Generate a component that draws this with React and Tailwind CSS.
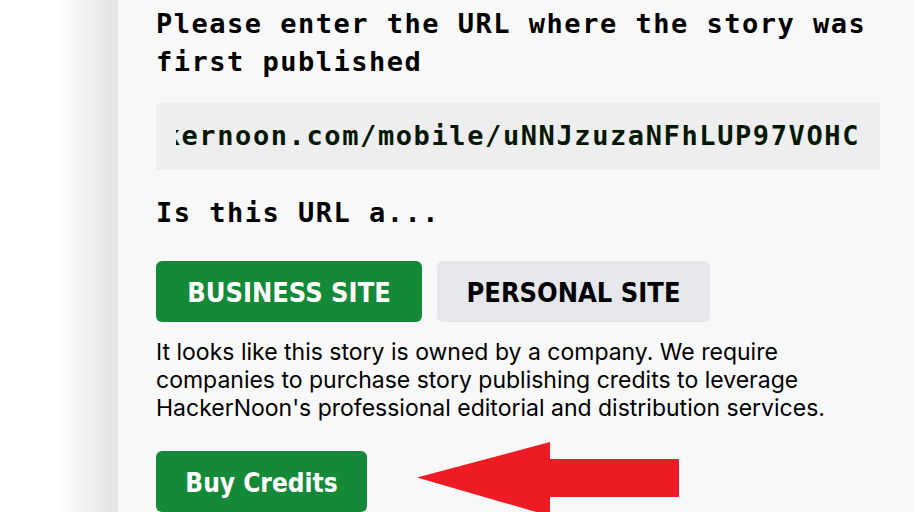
import { useState } from 'react';

const ArrowLeft = () => (
  <svg width="266" height="74" viewBox="0 0 266 74" className="shrink-0">
    <path
      d="M1 35.5 L134 0 L134 17 L262 17 Q263 17 263 18 L263 54 Q263 55 262 55 L134 55 L134 74 Z"
      fill="#ed1c24"
    />
  </svg>
);

const App = () => {
  const [siteType, setSiteType] = useState('business');
  const url = 'https://hackernoon.com/mobile/uNNJzuzaNFhLUP97VOHC';

  return (
    <div className="flex h-[512px] w-[914px] overflow-hidden bg-white">
      {/* page shadow on the left */}
      <div className="w-[118px] shrink-0 bg-gradient-to-r from-white from-50% to-[#e2e2e2]"></div>

      {/* Main panel */}
      <div className="min-w-0 flex-1 bg-[#f8f8f8] pl-[38px] pr-[34px] pt-[5px]">
        <h2 className="font-['DejaVu_Sans_Mono',monospace] text-[27px] font-bold leading-[38px] tracking-[1.5px] text-black">
          Please enter the URL where the story was first published
        </h2>

        <div className="mt-[22px] flex h-[67px] items-center bg-[#eeeeee] px-5">
          <div className="flex min-w-0 flex-1 justify-end overflow-hidden whitespace-nowrap font-['DejaVu_Sans_Mono',monospace] text-[27px] font-bold tracking-[1.6px] text-[#051805]">
            <span className="shrink-0">{url}</span>
          </div>
        </div>

        <h3 className="mt-[24px] font-['DejaVu_Sans_Mono',monospace] text-[27px] font-bold leading-[38px] tracking-[1.5px] text-black">
          Is this URL a...
        </h3>

        <div className="mt-[29px] flex gap-[15px]">
          <button
            onClick={() => setSiteType('business')}
            className={`h-[61px] w-[266px] rounded-md pt-[3px] font-['DejaVu_Sans_Condensed','DejaVu_Sans',sans-serif] text-[27px] font-bold ${siteType === 'business' ? 'bg-[#148a38] text-white' : 'bg-[#e5e7eb] text-black'}`}
          >
            BUSINESS SITE
          </button>
          <button
            onClick={() => setSiteType('personal')}
            className={`h-[61px] w-[273px] rounded-md pt-[3px] font-['DejaVu_Sans_Condensed','DejaVu_Sans',sans-serif] text-[27px] font-bold ${siteType === 'personal' ? 'bg-[#148a38] text-white' : 'bg-[#e5e7eb] text-black'}`}
          >
            PERSONAL SITE
          </button>
        </div>

        <p className="mt-4 max-w-[700px] font-['Inter',sans-serif] text-[23px] leading-[28px] text-black">
          It looks like this story is owned by a company. We require companies to purchase story publishing credits to leverage HackerNoon's professional editorial and distribution services.
        </p>

        <div className="mt-[29px] flex items-start">
          <button className="h-[61px] w-[211px] rounded-md bg-[#148a38] pt-[3px] font-['DejaVu_Sans_Condensed','DejaVu_Sans',sans-serif] text-[26px] font-bold text-white">
            Buy Credits
          </button>
          <div className="ml-[49px] -mt-[9px]">
            <ArrowLeft />
          </div>
        </div>
      </div>
    </div>
  );
};

export default App;
